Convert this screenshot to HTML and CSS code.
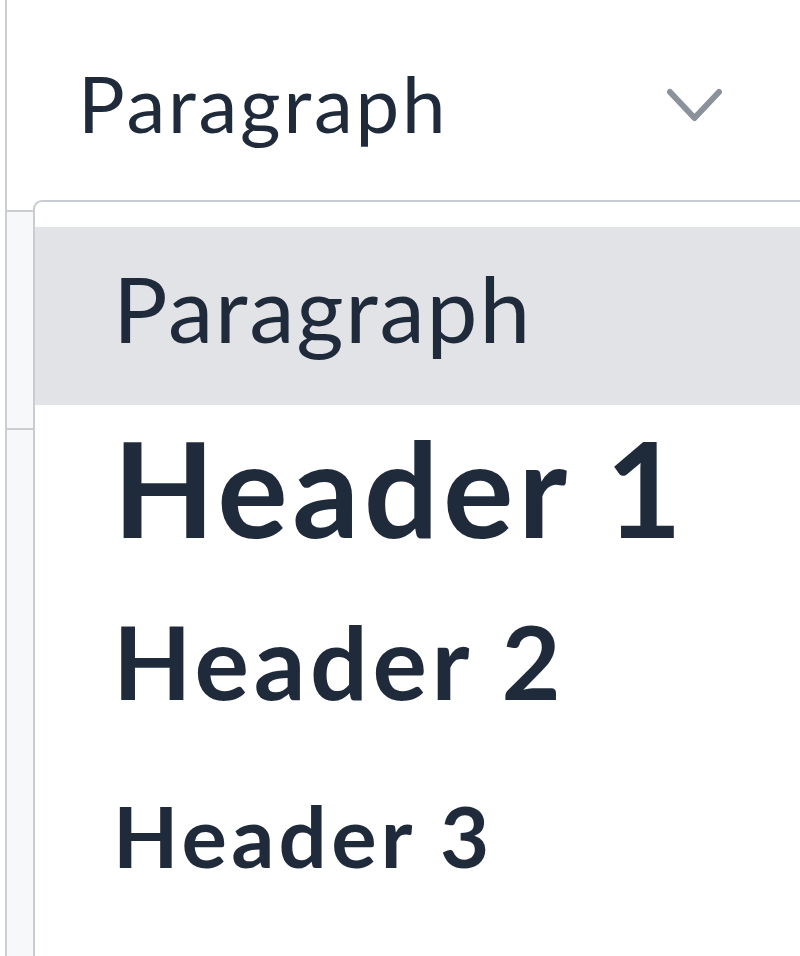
FILE: index.html
```html
<!DOCTYPE html>
<html>

<head>
    <title>Block format</title>
    <link rel="stylesheet" href="styles.css">
</head>

<body>
    <div class="editor">
        <div class="select">
            <span class="select-value">Paragraph</span>
            <svg class="chevron" width="60" height="40" viewBox="0 0 60 40">
                <polyline points="6,7 30.5,33 55,7" fill="none" stroke="#8b929b" stroke-width="6" stroke-linecap="round" stroke-linejoin="round" />
            </svg>
        </div>

        <div class="below">
            <div class="strip">
                <div class="strip-cell"></div>
                <div class="strip-cell strip-last"></div>
            </div>

            <ul class="menu">
                <li class="item item-p active">Paragraph</li>
                <li class="item item-h1">Header 1</li>
                <li class="item item-h2">Header 2</li>
                <li class="item item-h3">Header 3</li>
            </ul>
        </div>
    </div>
</body>

</html>
```

FILE: styles.css
```css
/* dropdown for block format */
html,
body {
    margin: 0;
    padding: 0;
    background: #ffffff;
    overflow: hidden;
    height: 956px;
}

body {
    font-family: Lato, "Open Sans", sans-serif;
    color: #1f2a3b;
}

.editor {
    margin-left: 5px;
    border-left: 2px solid #cbcdd0;
    height: 956px;
    overflow: hidden;
}

.select {
    height: 200px;
    display: flex;
    align-items: center;
    padding-top: 6px;
    box-sizing: border-box;
    padding-left: 71px;
}

.select-value {
    font-size: 78px;
    line-height: 94px;
    letter-spacing: 2.8px;
}

.chevron {
    margin-left: auto;
    margin-right: 76px;
    margin-top: 4px;
}

.below {
    display: flex;
}

.strip {
    width: 26px;
    padding-top: 10px;
    flex-shrink: 0;
}

.strip-cell {
    height: 216px;
    border-top: 2px solid #cbcdd0;
    background: #f7f8fa;
}

.strip-last {
    height: 600px;
}

.menu {
    list-style: none;
    margin: 0;
    padding: 25px 0 0 0;
    width: 900px;
    flex-shrink: 0;
    border-top: 2px solid #c9ccd0;
    border-left: 2px solid #c9ccd0;
    border-top-left-radius: 9px;
    background: #ffffff;
    height: 729px;
}

.item {
    padding-left: 78px;
    white-space: nowrap;
}

.active {
    background: #e1e3e6;
}

.item-p {
    font-size: 91px;
    line-height: 110px;
    padding-top: 26px;
    padding-bottom: 42px;
    letter-spacing: 1.8px;
}

.item-h1 {
    font-size: 132px;
    line-height: 158px;
    font-weight: bold;
    padding-top: 3px;
    letter-spacing: 4.5px;
}

.item-h2 {
    font-size: 102px;
    line-height: 122px;
    font-weight: bold;
    padding-top: 34px;
    letter-spacing: 4.6px;
}

.item-h3 {
    font-size: 85px;
    line-height: 102px;
    font-weight: bold;
    padding-top: 62px;
    letter-spacing: 4.3px;
}
```
